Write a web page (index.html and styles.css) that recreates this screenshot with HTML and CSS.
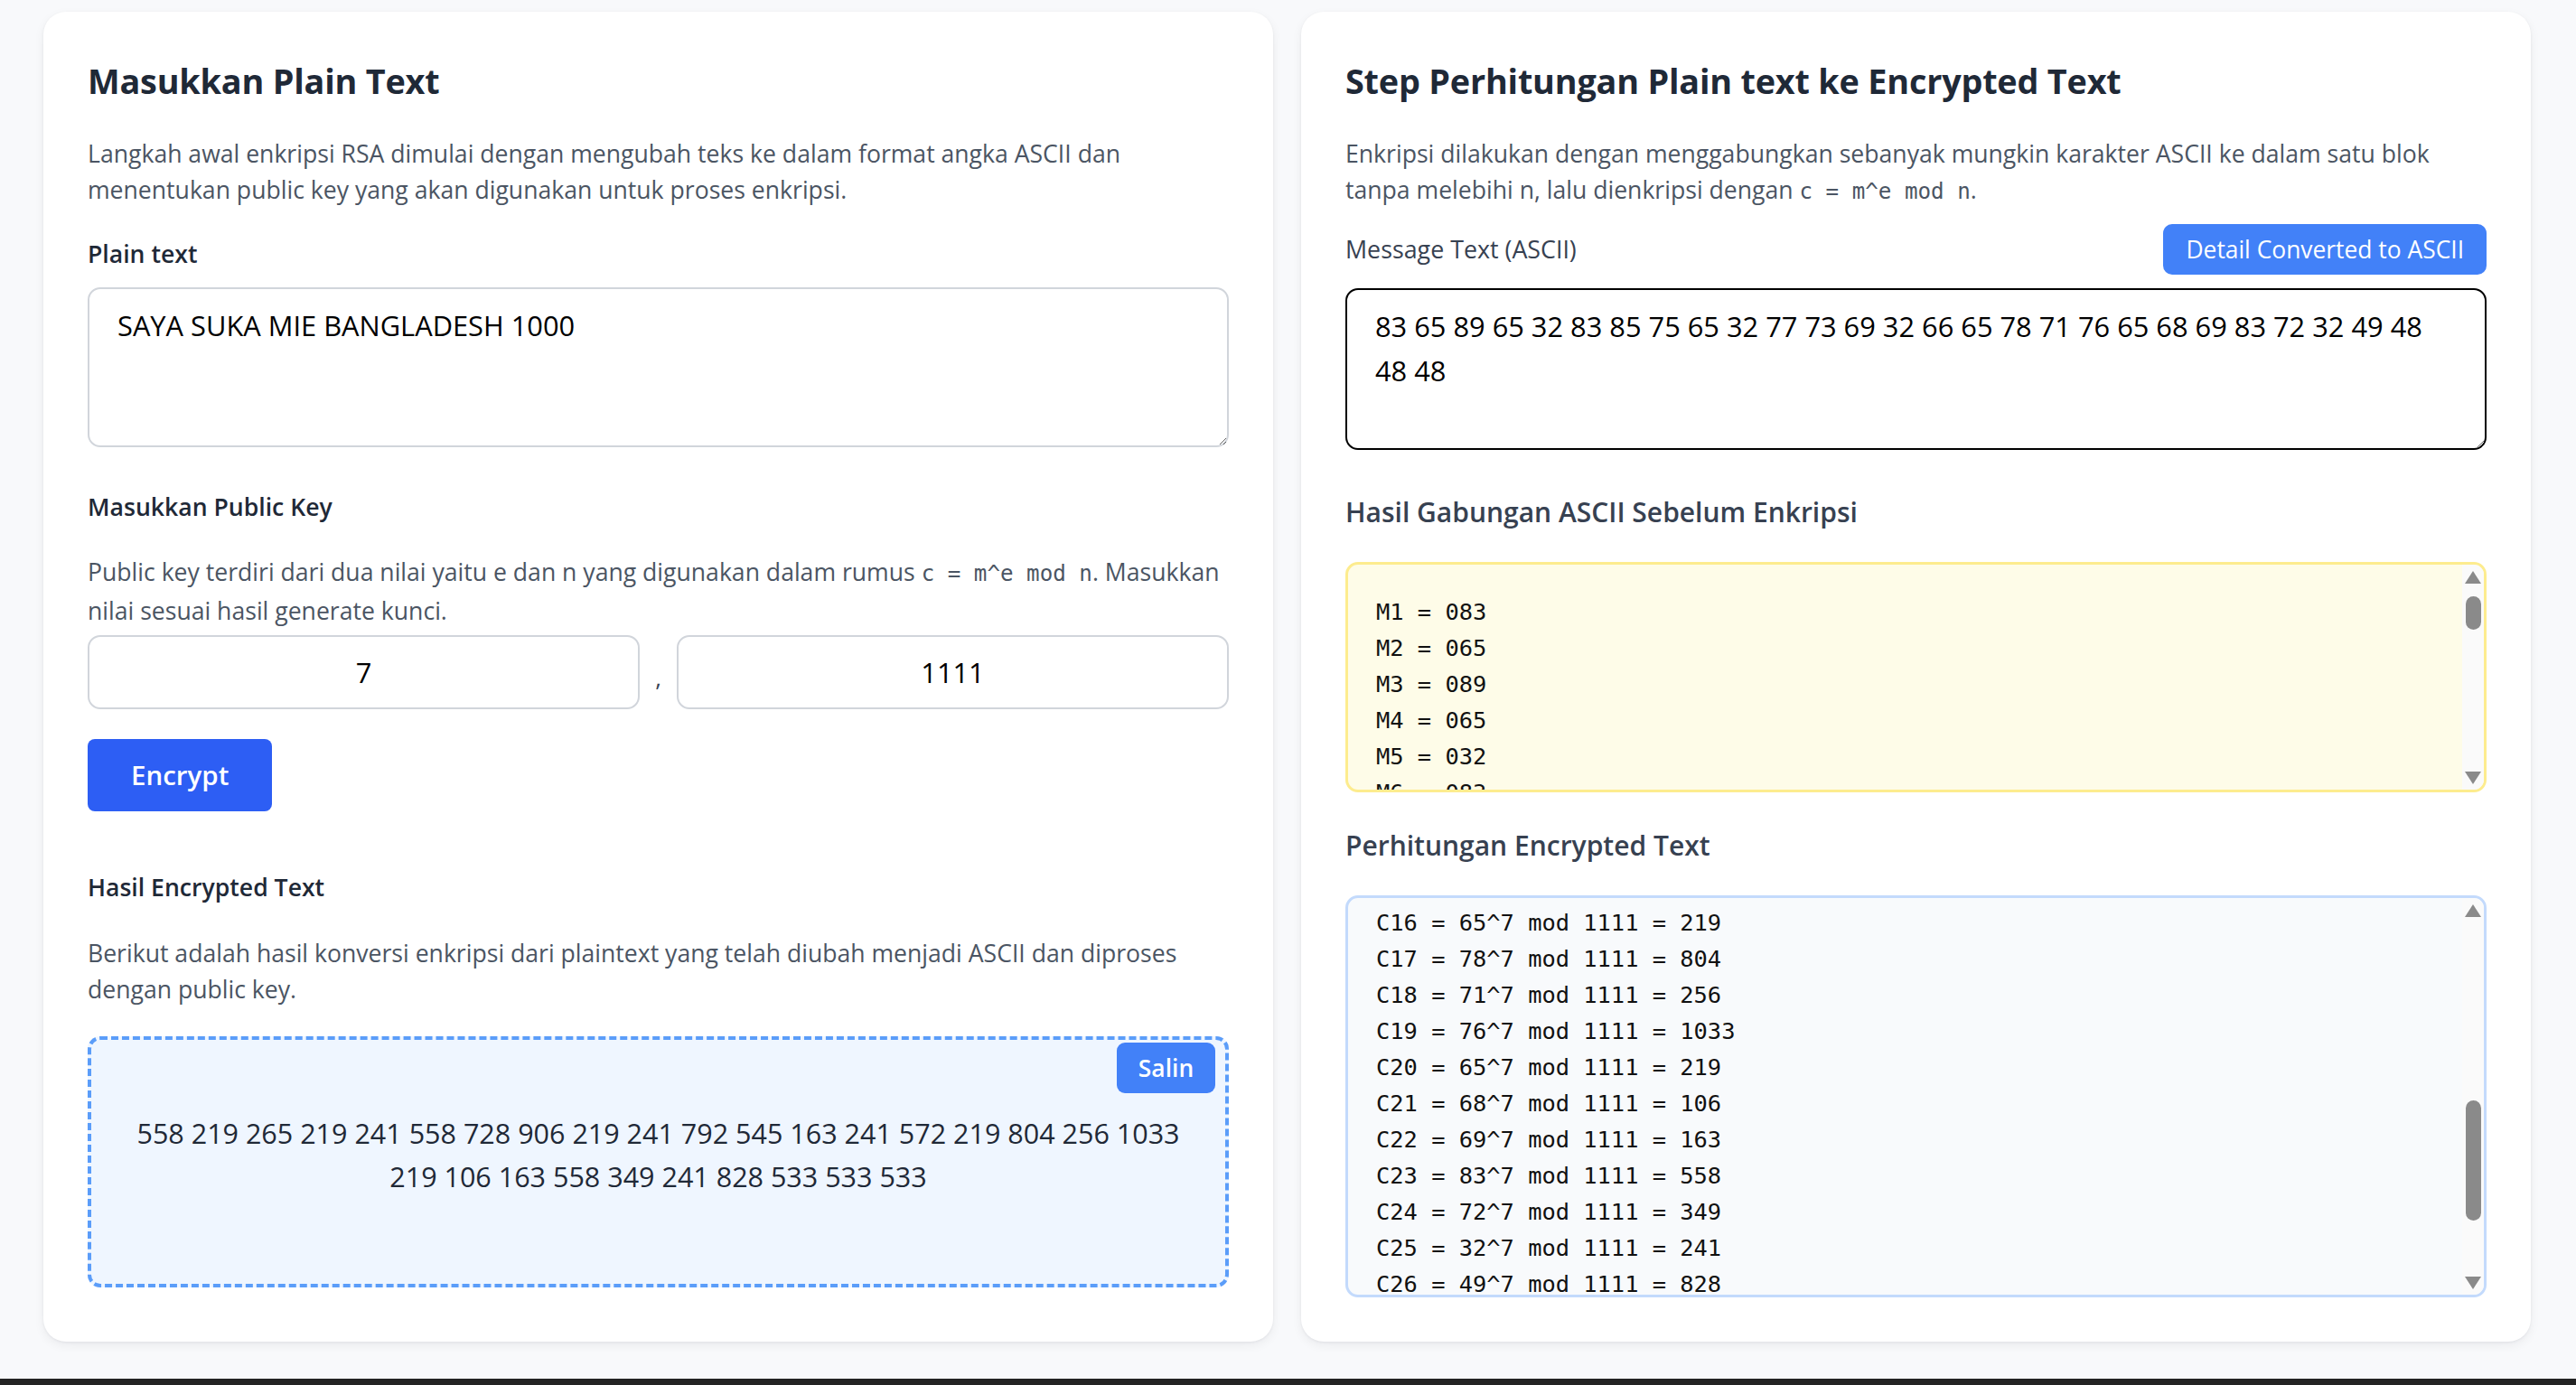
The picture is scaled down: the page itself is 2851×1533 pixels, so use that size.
FILE: index.html
```html
<!DOCTYPE html>
<html lang="id">
<head>
<meta charset="utf-8">
<title>Enkripsi RSA</title>
<link rel="stylesheet" href="styles.css">
</head>
<body>
<div class="page">
  <main class="grid">
    <section class="card">
      <h2 class="card-title">Masukkan Plain Text</h2>
      <p class="desc">Langkah awal enkripsi RSA dimulai dengan mengubah teks ke dalam format angka ASCII dan menentukan public key yang akan digunakan untuk proses enkripsi.</p>
      <label class="label label-plain" for="plain">Plain text</label>
      <textarea id="plain" class="textarea textarea-plain">SAYA SUKA MIE BANGLADESH 1000</textarea>
      <h3 class="label label-key">Masukkan Public Key</h3>
      <p class="desc desc-key">Public key terdiri dari dua nilai yaitu e dan n yang digunakan dalam rumus <code class="code">c = m^e mod n</code>. Masukkan nilai sesuai hasil generate kunci.</p>
      <div class="key-row">
        <input class="key-input" type="text" value="7">
        <span class="comma">,</span>
        <input class="key-input" type="text" value="1111">
      </div>
      <button class="btn-encrypt" type="button">Encrypt</button>
      <h3 class="label label-result">Hasil Encrypted Text</h3>
      <p class="desc desc-result">Berikut adalah hasil konversi enkripsi dari plaintext yang telah diubah menjadi ASCII dan diproses dengan public key.</p>
      <div class="result-box">
        <button class="btn-copy" type="button">Salin</button>
        <p class="result-text">558 219 265 219 241 558 728 906 219 241 792 545 163 241 572 219 804 256 1033 219 106 163 558 349 241 828 533 533 533</p>
      </div>
    </section>

    <section class="card">
      <h2 class="card-title">Step Perhitungan Plain text ke Encrypted Text</h2>
      <p class="desc">Enkripsi dilakukan dengan menggabungkan sebanyak mungkin karakter ASCII ke dalam satu blok tanpa melebihi n, lalu dienkripsi dengan <code class="code">c = m^e mod n</code>.</p>
      <div class="ascii-head">
        <span class="label-msg">Message Text (ASCII)</span>
        <button class="btn-detail" type="button">Detail Converted to ASCII</button>
      </div>
      <textarea class="textarea textarea-ascii">83 65 89 65 32 83 85 75 65 32 77 73 69 32 66 65 78 71 76 65 68 69 83 72 32 49 48 48 48</textarea>
      <h3 class="sub-title sub-first">Hasil Gabungan ASCII Sebelum Enkripsi</h3>
      <div class="scroll-wrap scroll-yellow">
<pre class="mono-box mono-yellow">M1 = 083
M2 = 065
M3 = 089
M4 = 065
M5 = 032
M6 = 083
M7 = 085
M8 = 075
M9 = 065
M10 = 032
M11 = 077
M12 = 073
M13 = 069
M14 = 032
M15 = 066
M16 = 065
M17 = 078
M18 = 071
M19 = 076
M20 = 065
M21 = 068
M22 = 069
M23 = 083
M24 = 072
M25 = 032
M26 = 049
M27 = 048
M28 = 048
M29 = 048</pre>
        <div class="vscroll" aria-hidden="true">
          <span class="arrow-up"></span>
          <span class="thumb"></span>
          <span class="arrow-down"></span>
        </div>
      </div>
      <h3 class="sub-title sub-second">Perhitungan Encrypted Text</h3>
      <div class="scroll-wrap scroll-blue">
<pre class="mono-box mono-blue">C1 = 83^7 mod 1111 = 558
C2 = 65^7 mod 1111 = 219
C3 = 89^7 mod 1111 = 265
C4 = 65^7 mod 1111 = 219
C5 = 32^7 mod 1111 = 241
C6 = 83^7 mod 1111 = 558
C7 = 85^7 mod 1111 = 728
C8 = 75^7 mod 1111 = 906
C9 = 65^7 mod 1111 = 219
C10 = 32^7 mod 1111 = 241
C11 = 77^7 mod 1111 = 792
C12 = 73^7 mod 1111 = 545
C13 = 69^7 mod 1111 = 163
C14 = 32^7 mod 1111 = 241
C15 = 66^7 mod 1111 = 572
C16 = 65^7 mod 1111 = 219
C17 = 78^7 mod 1111 = 804
C18 = 71^7 mod 1111 = 256
C19 = 76^7 mod 1111 = 1033
C20 = 65^7 mod 1111 = 219
C21 = 68^7 mod 1111 = 106
C22 = 69^7 mod 1111 = 163
C23 = 83^7 mod 1111 = 558
C24 = 72^7 mod 1111 = 349
C25 = 32^7 mod 1111 = 241
C26 = 49^7 mod 1111 = 828
C27 = 48^7 mod 1111 = 533
C28 = 48^7 mod 1111 = 533
C29 = 48^7 mod 1111 = 533</pre>
        <div class="vscroll" aria-hidden="true">
          <span class="arrow-up"></span>
          <span class="thumb"></span>
          <span class="arrow-down"></span>
        </div>
      </div>
    </section>
  </main>
  <div class="taskbar"></div>
</div>
<script src="script.js"></script>
</body>
</html>
```

FILE: styles.css
```css
* { box-sizing: border-box; }

html, body {
  margin: 0;
  padding: 0;
}

body {
  background: #f8f9fb;
  font-family: "Open Sans", "Noto Sans", sans-serif;
  color: #1f2937;
}

.page {
  height: 1533px;
  display: flex;
  flex-direction: column;
  overflow: hidden;
}

.grid {
  flex: 1;
  display: grid;
  grid-template-columns: 1361px 1361px;
  column-gap: 31px;
  align-content: start;
  padding: 13px 50px 0 48px;
}

.taskbar {
  height: 7px;
  background: #232323;
}

.card {
  background: #fff;
  border-radius: 25px;
  box-shadow: 0 4px 12px rgba(15, 23, 42, 0.06), 0 1px 3px rgba(15, 23, 42, 0.06);
  padding: 49px;
  display: flex;
  flex-direction: column;
  align-items: stretch;
}

.card-title {
  margin: 0;
  font-size: 37.8px;
  line-height: 56px;
  font-weight: 700;
  color: #1f2937;
  letter-spacing: -0.2px;
}

.desc {
  margin: 32px 0 0;
  font-size: 26.6px;
  line-height: 40px;
  color: #4b5563;
}

.code {
  font-family: "DejaVu Sans Mono", "Liberation Mono", monospace;
  font-size: 24.2px;
  color: #4b5563;
}

.label {
  display: block;
  margin: 31px 0 0;
  font-size: 26.6px;
  line-height: 40px;
  font-weight: 600;
  color: #1f2937;
}

.label-key { margin-top: 46px; }
.desc-key { line-height: 41px; }
.label-result { margin-top: 64px; }
.desc-result { margin-top: 33px; }

.textarea {
  display: block;
  width: 100%;
  border: 2px solid #d1d5db;
  border-radius: 14px;
  padding: 16px 40px 16px 31px;
  font-family: "Open Sans", "Noto Sans", sans-serif;
  font-size: 30.8px;
  line-height: 49px;
  color: #000;
  background: #fff;
  outline: none;
}

.textarea-plain {
  margin-top: 17px;
  height: 177px;
}

.key-row {
  margin-top: 6px;
  display: flex;
  align-items: center;
}

.key-input {
  flex: 1;
  min-width: 0;
  height: 82px;
  border: 2px solid #d1d5db;
  border-radius: 14px;
  text-align: center;
  font-family: "Open Sans", "Noto Sans", sans-serif;
  font-size: 30.8px;
  color: #000;
  background: #fff;
  outline: none;
}

.comma {
  width: 41px;
  text-align: center;
  font-size: 26px;
  line-height: 40px;
  padding-top: 12px;
  color: #374151;
}

.btn-encrypt {
  margin-top: 33px;
  align-self: flex-start;
  height: 80px;
  padding: 0 48px;
  border: 0;
  border-radius: 8px;
  background: #2d5ef4;
  color: #fff;
  font-family: "Open Sans", "Noto Sans", sans-serif;
  font-size: 29.5px;
  font-weight: 600;
  line-height: 80px;
}

.result-box {
  position: relative;
  margin-top: 32px;
  height: 278px;
  border: 4px dashed #5b9df9;
  border-radius: 14px;
  background: #eff6ff;
  padding: 79px 28px 0;
}

.result-text {
  margin: 0;
  text-align: center;
  font-size: 30.5px;
  line-height: 48px;
  color: #1f2937;
}

.btn-copy {
  position: absolute;
  top: 3px;
  right: 11px;
  width: 109px;
  height: 56px;
  padding: 0;
  border: 0;
  border-radius: 9px;
  background: #4281f8;
  color: #fff;
  font-family: "Open Sans", "Noto Sans", sans-serif;
  font-size: 26.4px;
  font-weight: 600;
  line-height: 56px;
}

/* right card */
.ascii-head {
  margin-top: 16px;
  display: flex;
  align-items: center;
  justify-content: space-between;
}

.label-msg {
  font-size: 26.8px;
  line-height: 40px;
  font-weight: 500;
  color: #374151;
}

.btn-detail {
  height: 56px;
  padding: 0 25px;
  border: 0;
  border-radius: 10px;
  background: #4281f8;
  color: #fff;
  font-family: "Open Sans", "Noto Sans", sans-serif;
  font-size: 26.4px;
  font-weight: 400;
  line-height: 56px;
}

.textarea-ascii {
  margin-top: 15px;
  height: 179px;
  border-color: #000;
}

.sub-title {
  margin: 47px 0 0;
  font-size: 30px;
  line-height: 44px;
  font-weight: 600;
  color: #374151;
}

.sub-second { margin-top: 37px; }

.scroll-wrap {
  position: relative;
  margin-top: 33px;
}

.mono-box {
  margin: 0;
  border: 3px solid;
  border-radius: 14px;
  overflow: hidden;
  white-space: pre;
  font-family: "DejaVu Sans Mono", "Liberation Mono", monospace;
  font-size: 25.4px;
  line-height: 40px;
  color: #111;
  padding: 32px 31px 85px;
}

.mono-yellow {
  height: 255px;
  background: #fefce8;
  border-color: #fdec8e;
}

.mono-blue {
  height: 445px;
  background: #f8fafc;
  border-color: #c3dafc;
}

/* drawn scrollbar over the scrolling boxes */
.vscroll {
  position: absolute;
  top: 3px;
  bottom: 3px;
  right: 3px;
  width: 24px;
  background: #fafafa;
  border-radius: 0 11px 11px 0;
}

.arrow-up,
.arrow-down {
  position: absolute;
  left: 3px;
  width: 0;
  height: 0;
  border-left: 9px solid transparent;
  border-right: 9px solid transparent;
}

.arrow-up {
  top: 7px;
  border-bottom: 14px solid #8a8a8a;
}

.arrow-down {
  bottom: 6px;
  border-top: 14px solid #8a8a8a;
}

.thumb {
  position: absolute;
  left: 3.5px;
  width: 17px;
  border-radius: 9px;
  background: #8a8a8a;
}

.scroll-yellow .thumb {
  top: 35px;
  height: 37px;
}

.scroll-blue .thumb {
  top: 224px;
  height: 133px;
}
```

FILE: script.js
```js
var calc = document.querySelector('.mono-blue');
if (calc) {
  calc.scrollTop = 625;
}
```
